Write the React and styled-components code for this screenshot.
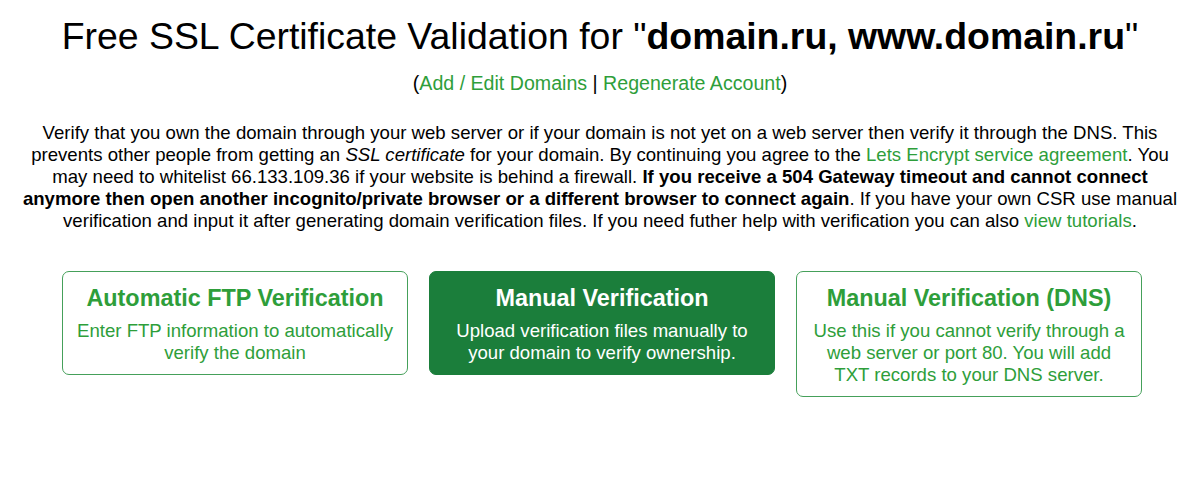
import styled, { createGlobalStyle } from "styled-components";

const GlobalStyle = createGlobalStyle`
  body {
    margin: 0;
    background: #ffffff;
    font-family: "Liberation Sans", Arial, sans-serif;
    color: #000000;
  }
`;

const Page = styled.main`
  width: 1160px;
  margin: 0 auto;
  padding-top: 14px;
  text-align: center;
`;

const Title = styled.h1`
  margin: 0;
  font-size: 37.4px;
  font-weight: normal;
  line-height: 44px;

  & b {
    font-weight: bold;
  }
`;

const SubLinks = styled.p`
  margin: 14px 0 0;
  font-size: 19.6px;
  line-height: 22px;
`;

const GreenLink = styled.a`
  color: #2e9e3a;
  text-decoration: none;
`;

const Intro = styled.p`
  margin: 28px 0 0;
  font-size: 18.6px;
  line-height: 22px;
`;

const CardRow = styled.div`
  display: flex;
  justify-content: center;
  align-items: flex-start;
  gap: 21px;
  margin-top: 39px;
  padding-left: 4px;
`;

const Card = styled.div`
  box-sizing: border-box;
  width: 346px;
  padding: 12px 12px 10px;
  border: 1px solid ${p => (p.$active ? "#1b7e3b" : "#45a05a")};
  border-radius: 7px;
  background: ${p => (p.$active ? "#1b7e3b" : "#ffffff")};
  color: ${p => (p.$active ? "#ffffff" : "#2e9e3a")};
`;

const CardTitle = styled.h3`
  margin: 0;
  font-size: 23.4px;
  line-height: 28px;
  font-weight: bold;
`;

const CardText = styled.p`
  margin: 8px 0 0;
  font-size: 18.6px;
  line-height: 22px;
`;

const cards = [
  {
    title: "Automatic FTP Verification",
    text: "Enter FTP information to automatically verify the domain",
  },
  {
    title: "Manual Verification",
    text: "Upload verification files manually to your domain to verify ownership.",
    active: true,
  },
  {
    title: "Manual Verification (DNS)",
    text: "Use this if you cannot verify through a web server or port 80. You will add TXT records to your DNS server.",
  },
];

export default function App() {
  return (
    <>
      <GlobalStyle />
      <Page>
        <Title>
          Free SSL Certificate Validation for "<b>domain.ru, www.domain.ru</b>"
        </Title>
        <SubLinks>
          (<GreenLink href="#">Add / Edit Domains</GreenLink> |{" "}
          <GreenLink href="#">Regenerate Account</GreenLink>)
        </SubLinks>
        <Intro>
          Verify that you own the domain through your web server or if your domain is not yet on a
          web server then verify it through the DNS. This prevents other people from getting an{" "}
          <i>SSL certificate</i> for your domain. By continuing you agree to the{" "}
          <GreenLink href="#">Lets Encrypt service agreement</GreenLink>. You may need to whitelist
          66.133.109.36 if your website is behind a firewall.{" "}
          <b>
            If you receive a 504 Gateway timeout and cannot connect anymore then open another
            incognito/private browser or a different browser to connect again
          </b>
          . If you have your own CSR use manual verification and input it after generating domain
          verification files. If you need futher help with verification you can also{" "}
          <GreenLink href="#">view tutorials</GreenLink>.
        </Intro>
        <CardRow>
          {cards.map(c => (
            <Card key={c.title} $active={c.active}>
              <CardTitle>{c.title}</CardTitle>
              <CardText>{c.text}</CardText>
            </Card>
          ))}
        </CardRow>
      </Page>
    </>
  );
}
